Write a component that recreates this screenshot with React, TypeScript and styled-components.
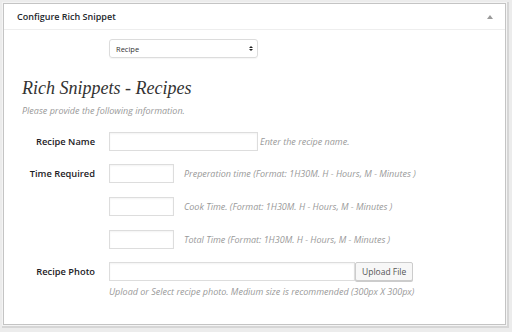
import styled, { createGlobalStyle } from "styled-components";

const GlobalStyle = createGlobalStyle`
    html, body {
        margin: 0;
        padding: 0;
        background: #ececec;
        font-family: "Open Sans", "Liberation Sans", sans-serif;
    }
`;

const Frame = styled.div`
    width: 512px;
    height: 332px;
    box-sizing: border-box;
    padding: 3px 6px 7px 3px;
    background: #ececec;
`;

const Panel = styled.div`
    height: 100%;
    box-sizing: border-box;
    background: #fff;
    border: 1px solid #c4c4c4;
    box-shadow: 0 0 0 1px #f4f4f4, 1px 1px 0 2px #d6d6d6;
    display: flex;
    flex-direction: column;
`;

const Header = styled.div`
    height: 26px;
    box-sizing: border-box;
    border-bottom: 1px solid #eeeeee;
    display: flex;
    align-items: center;
    justify-content: space-between;
    padding: 0 12px 0 13px;
    font-size: 9px;
    font-weight: 600;
    color: #23282d;
`;

const Toggle = styled.span`
    width: 0;
    height: 0;
    border-left: 3px solid transparent;
    border-right: 3px solid transparent;
    border-bottom: 4px solid #9a9a9a;
`;

const Body = styled.div`
    padding: 9px 0 0 18px;
`;

const SelectBox = styled.div`
    margin-left: 87px;
    width: 149px;
    height: 19px;
    box-sizing: border-box;
    border: 1px solid #dcdcdc;
    border-radius: 3px;
    display: flex;
    align-items: center;
    justify-content: space-between;
    padding: 0 4px 0 6px;
    font-size: 7.5px;
    color: #333;
    box-shadow: 0 1px 1px rgba(0, 0, 0, 0.04);
`;

const Arrows = styled.span`
    display: flex;
    flex-direction: column;
    gap: 1px;
    span {
        width: 0;
        height: 0;
        border-left: 2px solid transparent;
        border-right: 2px solid transparent;
    }
    span:first-child { border-bottom: 2.5px solid #222; }
    span:last-child { border-top: 2.5px solid #222; }
`;

const Title = styled.h2`
    margin: 19px 0 0 0;
    font-family: "Liberation Serif", "DejaVu Serif", serif;
    font-style: italic;
    font-weight: 400;
    font-size: 18px;
    line-height: 22px;
    color: #333;
`;

const Intro = styled.p`
    margin: 5px 0 0 0;
    font-size: 9px;
    font-style: italic;
    color: #999;
`;

const Rows = styled.div`
    margin-top: 15px;
    margin-left: -18px;
    display: grid;
    grid-template-columns: 91px 1fr;
    column-gap: 14px;
    row-gap: 13px;
    align-items: start;
`;

const Label = styled.div`
    text-align: right;
    font-size: 9.3px;
    font-weight: 600;
    color: #1d2125;
    line-height: 19px;
`;

const Field = styled.div`
    display: flex;
    flex-direction: column;
    gap: 14px;
`;

const Line = styled.div`
    display: flex;
    align-items: center;
`;

const Input = styled.div<{ $w: number }>`
    width: ${p => p.$w}px;
    height: 19px;
    box-sizing: border-box;
    border: 1px solid #dddddd;
    background: #fff;
    box-shadow: inset 0 1px 2px rgba(0, 0, 0, 0.05);
`;

const Hint = styled.span<{ $gap: number }>`
    margin-left: ${p => p.$gap}px;
    font-size: 9px;
    font-style: italic;
    color: #999;
    white-space: nowrap;
`;

const Button = styled.div`
    height: 19px;
    box-sizing: border-box;
    padding: 0 6px;
    border: 1px solid #cccccc;
    border-radius: 2px;
    background: #f7f7f7;
    box-shadow: 0 1px 0 #cccccc;
    font-size: 8.5px;
    color: #555;
    display: flex;
    align-items: center;
`;

const Note = styled.span`
    margin-top: -10px;
    font-size: 9px;
    font-style: italic;
    color: #999;
`;

const timeHints = [
    "Preperation time (Format: 1H30M. H - Hours, M - Minutes )",
    "Cook Time. (Format: 1H30M. H - Hours, M - Minutes )",
    "Total Time (Format: 1H30M. H - Hours, M - Minutes )",
];

function App() {
    return (
        <>
            <GlobalStyle />
            <Frame>
                <Panel>
                    <Header>
                        Configure Rich Snippet
                        <Toggle />
                    </Header>
                    <Body>
                        <SelectBox>
                            Recipe
                            <Arrows><span /><span /></Arrows>
                        </SelectBox>
                        <Title>Rich Snippets - Recipes</Title>
                        <Intro>Please provide the following information.</Intro>
                        <Rows>
                            <Label>Recipe Name</Label>
                            <Line>
                                <Input $w={149} />
                                <Hint $gap={2}>Enter the recipe name.</Hint>
                            </Line>
                            <Label>Time Required</Label>
                            <Field>
                                {timeHints.map(h => (
                                    <Line key={h}>
                                        <Input $w={65} />
                                        <Hint $gap={10}>{h}</Hint>
                                    </Line>
                                ))}
                            </Field>
                            <Label>Recipe Photo</Label>
                            <Field>
                                <Line>
                                    <Input $w={246} />
                                    <Button>Upload File</Button>
                                </Line>
                                <Note>Upload or Select recipe photo. Medium size is recommended (300px X 300px)</Note>
                            </Field>
                        </Rows>
                    </Body>
                </Panel>
            </Frame>
        </>
    );
}

export default App;
